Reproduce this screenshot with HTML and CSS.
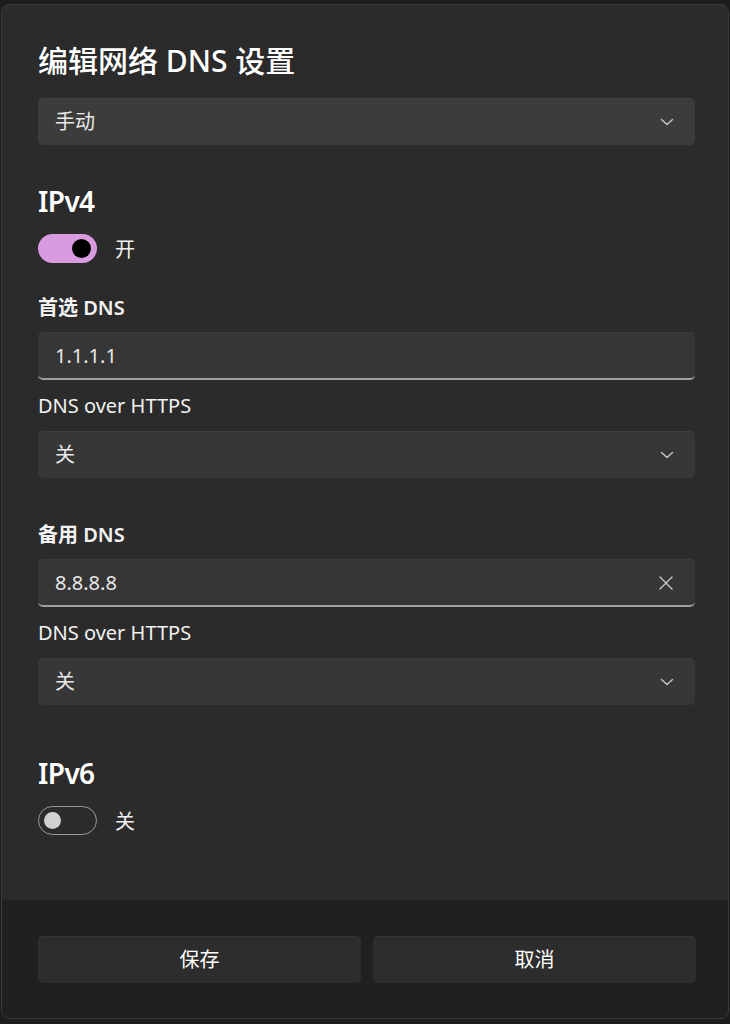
FILE: index.html
```html
<!DOCTYPE html>
<html lang="zh-CN">
<head>
<meta charset="utf-8">
<title>编辑网络 DNS 设置</title>
<link rel="stylesheet" href="styles.css">
</head>
<body>
<div class="dialog">
  <div class="dialog-body">
    <h1 class="title">编辑网络 DNS 设置</h1>
    <div class="field select select-hover">
      <span class="field-text">手动</span>
      <svg class="chev" width="14" height="8" viewBox="0 0 14 8"><polyline points="1.5,1.5 7,6.5 12.5,1.5" fill="none" stroke="#c8c8c8" stroke-width="1.4" stroke-linecap="round" stroke-linejoin="round"/></svg>
    </div>

    <h2 class="section-head head-v4">IPv4</h2>
    <div class="toggle-row">
      <span class="toggle on"><span class="knob"></span></span>
      <span class="toggle-label">开</span>
    </div>

    <div class="label strong lbl-primary">首选 DNS</div>
    <div class="field input">
      <span class="field-text">1.1.1.1</span>
    </div>
    <div class="label lbl-doh">DNS over HTTPS</div>
    <div class="field select">
      <span class="field-text">关</span>
      <svg class="chev" width="14" height="8" viewBox="0 0 14 8"><polyline points="1.5,1.5 7,6.5 12.5,1.5" fill="none" stroke="#c8c8c8" stroke-width="1.4" stroke-linecap="round" stroke-linejoin="round"/></svg>
    </div>

    <div class="label strong lbl-alt">备用 DNS</div>
    <div class="field input">
      <span class="field-text">8.8.8.8</span>
      <svg class="clear" width="14" height="14" viewBox="0 0 14 14"><path d="M1 1 L13 13 M13 1 L1 13" fill="none" stroke="#c8c8c8" stroke-width="1.4" stroke-linecap="round"/></svg>
    </div>
    <div class="label lbl-doh">DNS over HTTPS</div>
    <div class="field select">
      <span class="field-text">关</span>
      <svg class="chev" width="14" height="8" viewBox="0 0 14 8"><polyline points="1.5,1.5 7,6.5 12.5,1.5" fill="none" stroke="#c8c8c8" stroke-width="1.4" stroke-linecap="round" stroke-linejoin="round"/></svg>
    </div>

    <h2 class="section-head head-v6">IPv6</h2>
    <div class="toggle-row toggle-row-v6">
      <span class="toggle off"><span class="knob"></span></span>
      <span class="toggle-label">关</span>
    </div>
  </div>
  <div class="dialog-footer">
    <button class="btn">保存</button>
    <button class="btn">取消</button>
  </div>
</div>
</body>
</html>
```
FILE: styles.css
```css
* { box-sizing: border-box; }

html, body {
  margin: 0;
  padding: 0;
  background: #1c1c1c;
}

body {
  font-family: "Noto Sans", "Noto Sans CJK SC", sans-serif;
  color: #ffffff;
  width: 730px;
  height: 1024px;
  overflow: hidden;
}

.dialog {
  margin: 4px 0 0 1px;
  width: 728px;
  height: 1015px;
  background: #2b2b2b;
  border: 1px solid #3a3a3a;
  border-radius: 8px;
  overflow: hidden;
  display: flex;
  flex-direction: column;
}

.dialog-body {
  flex: 1;
  padding: 38px 0 0 36px;
  display: flex;
  flex-direction: column;
  align-items: flex-start;
}

.title {
  margin: 0;
  font-size: 30px;
  line-height: 36px;
  font-weight: 500;
  letter-spacing: 0;
}

.field {
  width: 657px;
  height: 47px;
  border-radius: 5px;
  background: #373737;
  border-top: 1px solid #3e3e3e;
  display: flex;
  align-items: center;
  padding: 0 21px 0 17px;
  font-size: 20px;
  color: #e8e8e8;
}

.select-hover {
  margin-top: 19px;
  background: #3c3c3c;
  border-top-color: #434343;
}

.field-text {
  flex: 1;
  line-height: 28px;
}

.input {
  height: 48px;
  border-bottom: 2px solid #a0a0a0;
  border-top-color: #3c3c3c;
  background: #363636;
}

.chev { display: block; }
.clear { display: block; margin-right: 1px; }

.section-head {
  margin: 0;
  font-size: 28px;
  line-height: 36px;
  font-weight: 600;
  letter-spacing: -0.6px;
}

.head-v4 { margin-top: 38px; }
.head-v6 { margin-top: 50px; }

.toggle-row {
  margin-top: 15px;
  display: flex;
  align-items: center;
  gap: 18px;
  height: 29px;
}

.toggle-row-v6 { margin-top: 15px; }

.toggle {
  width: 59px;
  height: 29px;
  border-radius: 15px;
  display: flex;
  align-items: center;
  padding: 0 6px;
}

.toggle.on {
  background: #d99be0;
  justify-content: flex-end;
}

.toggle.on .knob {
  width: 19px;
  height: 19px;
  border-radius: 50%;
  background: #000;
}

.toggle.off {
  border: 1.5px solid #9a9a9a;
  justify-content: flex-start;
  padding: 0 5px;
}

.toggle.off .knob {
  width: 17px;
  height: 17px;
  border-radius: 50%;
  background: #d0d0d0;
}

.toggle-label {
  font-size: 20px;
  line-height: 28px;
  color: #f0f0f0;
  position: relative;
  top: 1px;
}

.label {
  font-size: 20px;
  line-height: 28px;
  color: #f2f2f2;
  margin-bottom: 10px;
}

.strong { font-weight: 600; }

.lbl-primary { margin-top: 31px; }
.lbl-doh { margin-top: 12px; margin-bottom: 11px; }
.lbl-alt { margin-top: 43px; }

.dialog-footer {
  height: 119px;
  background: #202020;
  border-top: 1px solid #262626;
  display: flex;
  gap: 12px;
  padding: 36px 0 0 36px;
}

.btn {
  width: 323px;
  height: 47px;
  border: none;
  border-top: 1px solid #363636;
  border-radius: 5px;
  background: #2d2d2d;
  color: #ffffff;
  font-family: "Noto Sans", "Noto Sans CJK SC", sans-serif;
  font-size: 20px;
  line-height: 28px;
  padding: 0;
}
```
